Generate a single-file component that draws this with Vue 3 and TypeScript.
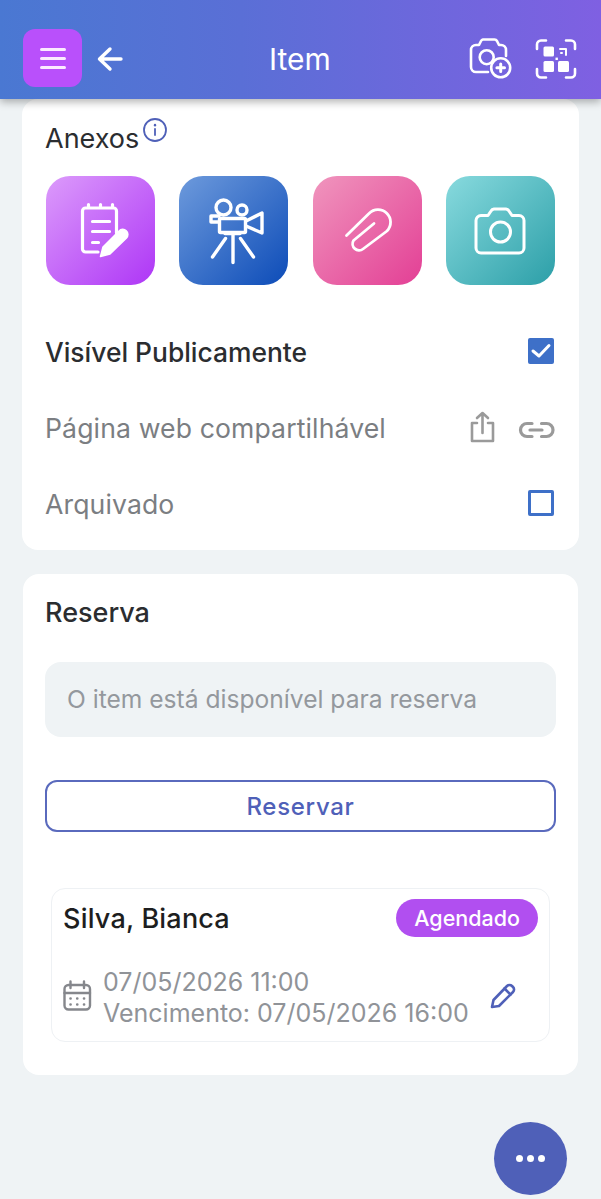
<template>
  <div class="page">
    <header class="topbar">
      <button class="menu-btn">
        <span></span><span></span><span></span>
      </button>
      <svg class="back" width="28" height="28" viewBox="0 0 28 28" fill="none" stroke="#fff" stroke-width="3.4" stroke-linecap="round" stroke-linejoin="round">
        <path d="M25 14H4M14 4L3.5 14 14 24" />
      </svg>
      <div class="title">Item</div>
      <svg class="cam-add" width="44" height="44" viewBox="0 0 44 44" fill="none" stroke="#fff" stroke-width="2.6" stroke-linecap="round" stroke-linejoin="round">
        <path d="M20 35H8a5 5 0 0 1-5-5V13a5 5 0 0 1 5-5h3l2-4a3 3 0 0 1 2-1.5h11a3 3 0 0 1 3 1.5l2 4h2a5 5 0 0 1 5 5v6" />
        <circle cx="18.7" cy="20.2" r="7" />
        <circle cx="32.7" cy="30.8" r="9.5" />
        <path d="M32.7 27v7.600M28.9 30.8h7.600" stroke-width="3" />
      </svg>
      <svg class="qr" width="42" height="42" viewBox="0 0 42 42" fill="none" stroke="#fff" stroke-width="2.6" stroke-linecap="round" stroke-linejoin="round">
        <path d="M2 11V6.5a4 4 0 0 1 4-4h5M31 2.5h5a4 4 0 0 1 4 4V11M40 31v4.500a4 4 0 0 1-4 4h-5M11 39.5H6a4 4 0 0 1-4-4V31" />
        <rect x="8.5" y="8.5" width="10.5" height="10" rx="1.5" fill="#fff" stroke="none" />
        <rect x="8.5" y="23" width="10.5" height="11" rx="1.5" fill="#fff" stroke="none" />
        <rect x="23" y="23" width="11" height="11" rx="1.5" fill="#fff" stroke="none" />
        <path d="M25 11h6v6M26 15h1" stroke-width="2" />
        <rect x="20.5" y="19.6" width="2.4" height="2.4" fill="#fff" stroke="none" />
      </svg>
    </header>

    <section class="card attachments">
      <div class="card-title">
        <span>Anexos</span>
        <svg class="info" width="26" height="26" viewBox="0 0 26 26" fill="none" stroke="#4f60b8" stroke-width="1.8" stroke-linecap="round">
          <circle cx="13" cy="13" r="11" />
          <path d="M13 12v6" />
          <path d="M13 8v.2" stroke-width="2.4" />
        </svg>
      </div>

      <div class="tiles">
        <div class="tile tile-note">
          <svg width="56" height="60" viewBox="0 0 56 60" fill="none" stroke="#fff" stroke-width="3.2" stroke-linecap="round" stroke-linejoin="round">
            <path d="M25 51H12.5a3 3 0 0 1-3-3V10a3 3 0 0 1 3-3h28a3 3 0 0 1 3 3v22" />
            <path d="M15.5 3.5v3M27.5 3.5v3M39.500 3.5v3M19.5 20.5h17M19.5 30.5h17M19.5 41.5h6" />
            <path d="M27.5 55.5l2.500-9.500L46 30a5 5 0 0 1 7.500 7L37 53z" fill="#fff" stroke-width="1.5" />
          </svg>
        </div>
        <div class="tile tile-video">
          <svg width="60" height="68" viewBox="0 0 60 68" fill="none" stroke="#fff" stroke-width="3.4" stroke-linecap="round" stroke-linejoin="round">
            <circle cx="19.5" cy="10.5" r="7.5" />
            <circle cx="38" cy="13" r="5" />
            <rect x="15.5" y="21.5" width="26" height="14" rx="1" />
            <path d="M15 19H7v6h8M42 24l16-8v20l-16-7M29 37v28.500M21.500 41.500L8.500 60M36.500 41.500L49.500 60M21 36.500h15" />
          </svg>
        </div>
        <div class="tile tile-clip">
          <svg width="56" height="56" viewBox="0 0 56 56" fill="none" stroke="#fff" stroke-width="2.8" stroke-linecap="round" stroke-linejoin="round">
            <path d="M7.500 32.500L30 10.500a12.500 12.500 0 0 1 18 17.500L24 46a6.500 6.500 0 0 1-9.500-8.500L35 20.500" />
          </svg>
        </div>
        <div class="tile tile-camera">
          <svg width="54" height="48" viewBox="0 0 54 48" fill="none" stroke="#fff" stroke-width="3" stroke-linecap="round" stroke-linejoin="round">
            <path d="M8 8.500h7l3-4.500a4 4 0 0 1 3-2h12a4 4 0 0 1 3 2l3 4.500h7a5 5 0 0 1 5 5V41a5 5 0 0 1-5 5H8a5 5 0 0 1-5-5V13.500a5 5 0 0 1 5-5z" />
            <circle cx="27.5" cy="25" r="10" />
          </svg>
        </div>
      </div>

      <div class="row row-public">
        <span class="row-strong">Visível Publicamente</span>
        <span class="check check-on">
          <svg width="26" height="26" viewBox="0 0 26 26" fill="none" stroke="#fff" stroke-width="3" stroke-linecap="round" stroke-linejoin="round">
            <path d="M5 13l6 5L21 7.500" />
          </svg>
        </span>
      </div>
      <div class="row row-share">
        <span class="row-text">Página web compartilhável</span>
        <div class="row-icons">
          <svg width="28" height="36" viewBox="0 0 28 36" fill="none" stroke="#9a9a9a" stroke-width="2.6" stroke-linecap="round" stroke-linejoin="round">
            <path d="M9 13H4v18h21V13h-5M14.500 23V3M9 8l5.500-5 5.500 5" />
          </svg>
          <svg class="link" width="38" height="22" viewBox="0 0 38 22" fill="none" stroke="#9a9a9a" stroke-width="3.2" stroke-linecap="round">
            <path d="M15 4.500h-5a6.500 6.500 0 0 0 0 13h5M24.500 4.500h5a6.500 6.500 0 0 1 0 13h-5M13 11h12" />
          </svg>
        </div>
      </div>
      <div class="row row-archive">
        <span class="row-text">Arquivado</span>
        <span class="check"></span>
      </div>
    </section>

    <section class="card booking">
      <div class="card-title">Reserva</div>
      <div class="notice">O item está disponível para reserva</div>
      <button class="reserve-btn">Reservar</button>

      <div class="entry">
        <div class="entry-head">
          <span class="entry-name">Silva, Bianca</span>
          <span class="badge">Agendado</span>
        </div>
        <div class="entry-body">
          <svg class="cal" width="30" height="36" viewBox="0 0 30 36" fill="none" stroke="#85878c" stroke-width="2.4" stroke-linecap="round">
            <rect x="1.5" y="5" width="25.5" height="24.5" rx="4" />
            <path d="M1.5 13h25.500M7.500 1.5V8M21 1.5V8" />
            <path d="M7.500 18.500h.1M14.200 18.500h.1M21 18.500h.1M7.500 24.500h.1M14.200 24.500h.1M21 24.500h.1" stroke-width="2.6" />
          </svg>
          <div class="dates">
            <div>07/05/2026 11:00</div>
            <div>Vencimento: 07/05/2026 16:00</div>
          </div>
          <svg class="pencil" width="28" height="28" viewBox="0 0 28 28" fill="none" stroke="#4f60b8" stroke-width="2.6" stroke-linecap="round" stroke-linejoin="round">
            <path d="M3 25l1.500-7L18 4a3.500 3.500 0 0 1 5 0l1 1a3.500 3.500 0 0 1 0 5L10 24z" />
            <path d="M15.500 6.500l6 6" />
          </svg>
        </div>
      </div>
    </section>

    <button class="fab">
      <i></i><i></i><i></i>
    </button>
  </div>
</template>

<script setup lang="ts">
</script>

<style>
html,
body {
  margin: 0;
  background: #eff3f5;
}
</style>

<style scoped>
.page {
  position: relative;
  width: 601px;
  height: 1199px;
  overflow: hidden;
  background: #eff3f5;
  font-family: Inter, "Liberation Sans", sans-serif;
  color: #2b2d30;
}

.topbar {
  position: relative;
  z-index: 2;
  display: flex;
  align-items: center;
  box-sizing: border-box;
  height: 99px;
  padding: 18px 24px 0 23px;
  background: linear-gradient(90deg, #4a78d2 0%, #5a6fd6 40%, #7f60e2 100%);
  box-shadow: 0 3px 8px rgba(0, 0, 0, 0.3);
}

.menu-btn {
  display: flex;
  flex-direction: column;
  align-items: center;
  justify-content: center;
  gap: 6px;
  width: 59px;
  height: 58px;
  margin: 0 0 1px;
  padding: 0;
  border: 0;
  border-radius: 12px;
  background: #b950fb;
}

.menu-btn span {
  width: 26px;
  height: 3px;
  border-radius: 2px;
  background: #fbeaff;
}

.back {
  margin-left: 14px;
}

.title {
  flex: 1;
  padding-left: 8px;
  font-size: 30px;
  line-height: 36px;
  text-align: center;
  color: #fff;
}

.qr {
  margin-left: 23px;
}

.card {
  box-sizing: border-box;
  margin: 0 22px;
  border-radius: 16px;
  background: #fff;
}

.attachments {
  height: 451px;
  padding: 0 24px;
}

.card-title {
  font-size: 27px;
  line-height: 34px;
  font-weight: 500;
  color: #2b2d30;
}

.attachments .card-title {
  display: flex;
  align-items: flex-start;
  margin-left: -1px;
  padding-top: 23px;
  font-weight: 400;
}

.info {
  margin: -5px 0 0 3px;
}

.tiles {
  display: flex;
  justify-content: space-between;
  margin-top: 20px;
}

.tile {
  display: flex;
  align-items: center;
  justify-content: center;
  width: 109px;
  height: 109px;
  border-radius: 24px;
}

.tile-note {
  background: linear-gradient(135deg, #dc9bfb 0%, #ae36f6 100%);
}

.tile-video {
  background: linear-gradient(135deg, #6d9adc 0%, #0d4cb8 100%);
}

.tile-clip {
  background: linear-gradient(135deg, #f095bd 0%, #e33f95 100%);
}

.tile-camera {
  background: linear-gradient(135deg, #88dade 0%, #2c9fa8 100%);
}

.row {
  display: flex;
  align-items: center;
  justify-content: space-between;
  height: 40px;
}

.row-public {
  margin-top: 47px;
}

.row-share {
  margin-top: 36px;
}

.row-archive {
  margin-top: 36px;
}

.row-strong {
  margin-left: -1px;
  font-size: 26.4px;
  font-weight: 500;
  color: #2b2d30;
}

.row-text {
  margin-left: -1px;
  font-size: 26.6px;
  letter-spacing: 0.12px;
  color: #7b7e82;
}

.row-icons {
  display: flex;
  align-items: center;
  gap: 21px;
}

.link {
  margin-top: 4px;
}

.check {
  box-sizing: border-box;
  display: flex;
  align-items: center;
  justify-content: center;
  width: 26px;
  height: 26px;
  margin: 0 1px 2px 0;
  border: 3px solid #3e70c8;
  border-radius: 2px;
}

.check-on {
  border: 0;
  background: #3e70c8;
}

.booking {
  height: 501px;
  margin: 24px 23px 0;
  padding: 22px 22px 0;
}

.notice {
  box-sizing: border-box;
  height: 75px;
  margin-top: 32px;
  padding: 0 22px;
  border-radius: 16px;
  background: #eff3f5;
  font-size: 24.6px;
  line-height: 75px;
  color: #94989d;
}

.reserve-btn {
  display: block;
  box-sizing: border-box;
  width: 100%;
  height: 52px;
  margin-top: 43px;
  padding: 0;
  border: 2px solid #5a6abd;
  border-radius: 12px;
  background: #fff;
  font-family: inherit;
  font-size: 24px;
  font-weight: 450;
  letter-spacing: 0.7px;
  color: #4f60b8;
}

.entry {
  box-sizing: border-box;
  height: 154px;
  margin: 56px 6px 0;
  padding: 10px 11px 0 11px;
  border: 1px solid #eef1f4;
  border-radius: 14px;
}

.entry-head {
  display: flex;
  align-items: center;
  justify-content: space-between;
}

.entry-name {
  font-size: 27px;
  font-weight: 500;
  letter-spacing: 0.2px;
  color: #1d1e20;
}

.badge {
  height: 38px;
  padding: 0 18px;
  border-radius: 19px;
  background: #b14ff0;
  font-size: 21.5px;
  font-weight: 500;
  line-height: 38px;
  color: #fff;
}

.entry-body {
  display: flex;
  align-items: center;
  margin-top: 30px;
}

.cal {
  flex: none;
}

.dates {
  flex: 1;
  margin-left: 10px;
  font-size: 25px;
  line-height: 31px;
  color: #909398;
}

.pencil {
  margin: -5px 21px 0 0;
}

.fab {
  position: absolute;
  left: 494px;
  top: 1122px;
  display: flex;
  align-items: center;
  justify-content: center;
  gap: 4px;
  width: 73px;
  height: 73px;
  padding: 0;
  border: 0;
  border-radius: 50%;
  background: #4f60b8;
}

.fab i {
  width: 7px;
  height: 7px;
  border-radius: 50%;
  background: #fff;
}
</style>
